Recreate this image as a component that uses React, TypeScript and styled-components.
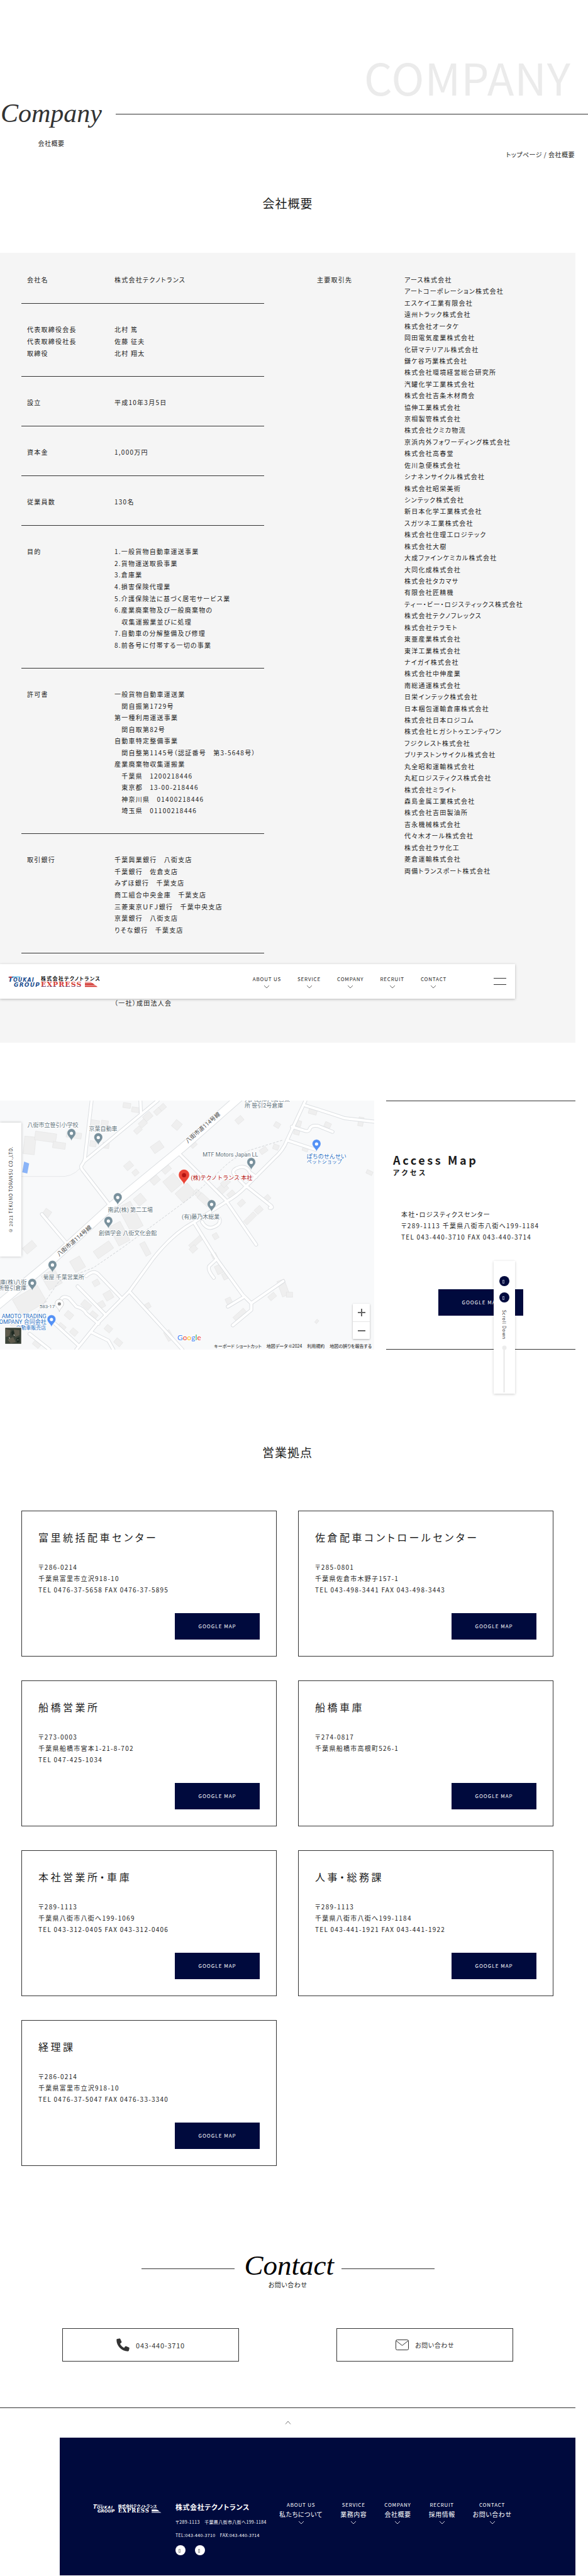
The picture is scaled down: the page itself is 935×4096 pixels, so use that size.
import React from 'react';
import styled, { createGlobalStyle } from 'styled-components';

const INK = '#1c1c1c';
const LINE = '#333';
const NAVY = '#000a3d';
const SANS = '"Noto Sans CJK JP", "Noto Sans", sans-serif';

const GlobalStyle = createGlobalStyle`
  *, *::before, *::after { box-sizing: border-box; }
  body {
    margin: 0;
    background: #fff;
    color: ${INK};
    font-family: ${SANS};
    font-size: 10px;
    line-height: 18px;
    font-feature-settings: "palt";
    overflow-x: hidden;
  }
  h1, h2, h3, p, ul, dl, dd, dt { margin: 0; padding: 0; font-weight: 400; }
  ul { list-style: none; }
  a { color: inherit; text-decoration: none; }
  button { font: inherit; cursor: pointer; }
`;

/* ---------- page title ---------- */

const Hero = styled.header`
  padding-top: 86px;
`;

const Backdrop = styled.p`
  padding-right: 27px;
  text-align: right;
  font-size: 70px;
  line-height: 72px;
  letter-spacing: 1px;
  color: #ebebeb;
`;

const TitleRow = styled.div`
  display: flex;
  align-items: flex-start;
  gap: 21px;
`;

const TitleBlock = styled.div`
  width: 163px;
  text-align: center;
`;

const Script = styled.span<{ $size: number }>`
  display: block;
  font-family: "Liberation Serif", serif;
  font-style: italic;
  font-size: ${p => p.$size}px;
  line-height: 44px;
  color: ${LINE};
`;

const ScriptCaption = styled.span`
  display: block;
  font-size: 10px;
  line-height: 18px;
  letter-spacing: 0.05em;
`;

const PageTitle = styled.h1`
  ${ScriptCaption} { margin-top: 17px; }
`;

const TitleRule = styled.div`
  flex: 1;
  margin-top: 23px;
  border-top: 1px solid ${LINE};
`;

const Breadcrumb = styled.nav`
  padding-right: 21px;
  text-align: right;
  letter-spacing: 0.05em;
`;

const Main = styled.main`
  margin-right: 20px;
`;

const SectionTitle = styled.h2<{ $before: number; $after: number }>`
  padding: ${p => p.$before}px 0 ${p => p.$after}px;
  text-align: center;
  font-size: 19px;
  line-height: 28px;
  letter-spacing: 1px;
`;

/* ---------- company profile ---------- */

const Profile = styled.section`
  position: relative;
  display: grid;
  grid-template-columns: 386fr 411fr;
  column-gap: 84px;
  padding: 2px 0 27px 34px;
  background: #f5f5f5;
  letter-spacing: 0.125em;
`;

const ProfileRow = styled.div<{ $last?: boolean }>`
  display: grid;
  grid-template-columns: 139px 1fr;
  padding: 32px 0 27px 9px;
  border-bottom: ${p => (p.$last ? '0' : `1px solid ${LINE}`)};
`;

const Lines = styled.dd<{ $height: number; $end?: boolean }>`
  display: flex;
  flex-direction: column;
  justify-content: ${p => (p.$end ? 'flex-end' : 'space-between')};
  min-height: ${p => p.$height}px;
  white-space: nowrap;
`;

const Terms = styled(Lines).attrs({ as: 'dt' })``;

const Clients = styled.dl`
  display: grid;
  grid-template-columns: 139px 1fr;
  padding-top: 32px;
  align-items: start;
`;

/* ---------- floating navigation ---------- */

const FloatingBar = styled.div`
  position: absolute;
  left: 0;
  right: 96px;
  bottom: 70px;
  height: 55px;
  display: flex;
  align-items: center;
  padding: 0 14px 0 13px;
  background: #fff;
  box-shadow: 0 1px 4px rgba(0, 0, 0, 0.25);
`;

const LogoLink = styled.a`
  display: flex;
`;

const NavList = styled.ul<{ $gap: number }>`
  display: flex;
  gap: ${p => p.$gap}px;
`;

const BarNav = styled.nav`
  margin-left: auto;
  margin-right: 75px;
`;

const NavLink = styled.a`
  display: flex;
  flex-direction: column;
  align-items: center;
  font-size: 8px;
  line-height: 14px;
  letter-spacing: 0.1em;
  white-space: nowrap;
  svg { margin-top: 2px; }
`;

const NavJp = styled.span`
  font-size: 10px;
  line-height: 16px;
  letter-spacing: 0.05em;
`;

const MenuButton = styled.button`
  width: 20px;
  height: 11px;
  padding: 0;
  background: none;
  border: solid ${LINE};
  border-width: 1px 0;
`;

/* ---------- access ---------- */

const Access = styled.section`
  position: relative;
  display: grid;
  grid-template-columns: 595fr 301fr;
  column-gap: 19px;
  margin-top: 92px;
`;

const MapFrame = styled.div`
  position: relative;
  height: 396px;
  overflow: hidden;
  background: #f8f9fa;
  letter-spacing: 0;
  > svg {
    display: block;
    width: 100%;
    height: 100%;
    font-feature-settings: normal;
  }
`;

const ZoomControls = styled.div`
  position: absolute;
  right: 7px;
  bottom: 17px;
  width: 27px;
  display: flex;
  flex-direction: column;
  background: #fff;
  border-radius: 1px;
  box-shadow: 0 1px 3px rgba(0, 0, 0, 0.3);
`;

const ZoomButton = styled.button`
  height: 28px;
  padding: 0;
  display: flex;
  align-items: center;
  justify-content: center;
  background: none;
  border: 0;
  & + & { border-top: 1px solid #e6e6e6; }
`;

const MapLinks = styled.div`
  position: absolute;
  right: 4px;
  bottom: 0;
  display: flex;
  gap: 8px;
  font-size: 7px;
  line-height: 11px;
  color: #111;
`;

const AccessPanel = styled.div`
  display: flex;
  flex-direction: column;
  padding: 80px 0 0 11px;
  border: solid ${LINE};
  border-width: 1px 0;
`;

const AccessTitle = styled.h2`
  font-size: 18px;
  line-height: 26px;
  font-weight: 700;
  letter-spacing: 0.2em;
  span {
    display: block;
    font-size: 11px;
    line-height: 14px;
  }
`;

const Address = styled.address`
  font-style: normal;
  letter-spacing: 0.125em;
  white-space: nowrap;
`;

const AccessAddress = styled(Address)`
  padding: 51px 0 74px 13px;
`;

const MapLink = styled.a`
  display: block;
  width: 135px;
  text-align: center;
  background: ${NAVY};
  color: #fff;
  font-size: 8px;
  line-height: 42px;
  letter-spacing: 1px;
`;

const AccessMapLink = styled(MapLink)`
  margin-left: 72px;
`;

const CopyrightTab = styled.small`
  position: absolute;
  left: 0;
  top: 35px;
  width: 34px;
  height: 213px;
  display: flex;
  align-items: center;
  justify-content: center;
  writing-mode: vertical-rl;
  transform: rotate(180deg);
  background: #fff;
  box-shadow: 0 0 4px rgba(0, 0, 0, 0.25);
  font-size: 7px;
  letter-spacing: 0.1em;
`;

const ScrollTab = styled.aside`
  position: absolute;
  right: 96px;
  top: 255px;
  width: 34px;
  height: 211px;
  display: flex;
  flex-direction: column;
  align-items: center;
  padding-top: 24px;
  background: #fff;
  box-shadow: 0 1px 4px rgba(0, 0, 0, 0.2);
`;

const Round = styled.a<{ $dark?: boolean }>`
  display: flex;
  align-items: center;
  justify-content: center;
  width: 16px;
  height: 16px;
  padding: 2px 4px 0 0;
  border-radius: 50%;
  background: ${p => (p.$dark ? NAVY : '#fff')};
  &::before {
    content: "";
    width: 3px;
    height: 6px;
    border: 1px solid ${p => (p.$dark ? '#8a90b0' : '#999')};
  }
`;

const RoundStack = styled.div`
  display: grid;
  gap: 10px;
`;

const ScrollLabel = styled.span`
  margin: 12px 0 9px;
  writing-mode: vertical-rl;
  font-size: 7px;
  line-height: 10px;
  letter-spacing: 0.1em;
  color: ${LINE};
`;

/* ---------- offices ---------- */

const Offices = styled.section`
  padding: 0 35px 0 34px;
`;

const OfficeGrid = styled.div`
  display: grid;
  grid-template-columns: 1fr 1fr;
  gap: 38px 34px;
`;

const OfficeCard = styled.article`
  display: flex;
  flex-direction: column;
  padding: 26px;
  border: 1px solid ${LINE};
  ${MapLink} { align-self: flex-end; }
`;

const OfficeName = styled.h3`
  font-size: 16px;
  line-height: 31px;
  letter-spacing: 0.22em;
`;

const OfficeAddress = styled(Address)`
  min-height: 55px;
  margin: 23px 0 27px;
`;

/* ---------- contact ---------- */

const Contact = styled.section`
  padding: 136px 99px 73px;
`;

const ContactTitle = styled.h2`
  display: grid;
  grid-template-columns: 148px auto 148px;
  justify-content: center;
  column-gap: 16px;
  text-align: center;
  &::before, &::after {
    content: "";
    margin-top: 27px;
    border-top: 1px solid ${LINE};
  }
`;

const ContactHead = styled.span`
  width: 138px;
  ${Script} { color: #000; }
`;

const ContactLinks = styled.div`
  display: flex;
  justify-content: space-between;
  margin-top: 60px;
`;

const ContactLink = styled.a`
  display: flex;
  align-items: center;
  justify-content: center;
  gap: 10px;
  width: 281px;
  height: 53px;
  border: 1px solid ${LINE};
  color: ${LINE};
  font-size: 10px;
  letter-spacing: 0.05em;
`;

const Phone = styled.span`
  font-size: 11px;
  letter-spacing: 0.07em;
`;

const BackToTop = styled.a`
  display: flex;
  justify-content: center;
  height: 48px;
  padding-top: 20px;
  border-top: 1px solid ${LINE};
`;

/* ---------- footer ---------- */

const Footer = styled.footer`
  display: flex;
  align-items: flex-start;
  margin: 0 20px 0 95px;
  padding: 100px 0 32px 53px;
  background: ${NAVY};
  color: #fff;
  > svg { margin-top: 4px; }
`;

const FooterInfo = styled.div`
  width: 165px;
  margin-left: 18px;
  font-size: 7px;
  line-height: 21px;
  letter-spacing: 0.05em;
  white-space: nowrap;
`;

const FooterName = styled.p`
  font-size: 11px;
  line-height: 20px;
  && { font-weight: 700; }
  letter-spacing: 0.05em;
  margin-bottom: 4px;
`;

const FooterRounds = styled.div`
  display: flex;
  gap: 15px;
  margin-top: 5px;
`;

/* ---------- data ---------- */

type Row = { terms: string[]; values: string[]; height: number; end?: boolean };

const PROFILE: Row[] = [
  { terms: ['会社名'], values: ['株式会社テクノトランス'], height: 19 },
  {
    terms: ['代表取締役会長', '代表取締役社長', '取締役'],
    values: ['北村 篤', '佐藤 征夫', '北村 翔太'],
    height: 56,
  },
  { terms: ['設立'], values: ['平成10年3月5日'], height: 19 },
  { terms: ['資本金'], values: ['1,000万円'], height: 19 },
  { terms: ['従業員数'], values: ['130名'], height: 19 },
  {
    terms: ['目的'],
    values: [
      '1.一般貨物自動車運送事業',
      '2.貨物運送取扱事業',
      '3.倉庫業',
      '4.損害保険代理業',
      '5.介護保険法に基づく居宅サービス業',
      '6.産業廃棄物及び一般廃棄物の',
      '　収集運搬業並びに処理',
      '7.自動車の分解整備及び修理',
      '8.前各号に付帯する一切の事業',
    ],
    height: 167,
  },
  {
    terms: ['許可書'],
    values: [
      '一般貨物自動車運送業',
      '　関自振第1729号',
      '第一種利用運送事業',
      '　関自取第82号',
      '自動車特定整備事業',
      '　関自整第1145号（認証番号　第3-5648号）',
      '産業廃棄物収集運搬業',
      '　千葉県　1200218446',
      '　東京都　13-00-218446',
      '　神奈川県　01400218446',
      '　埼玉県　01100218446',
    ],
    height: 203,
  },
  {
    terms: ['取引銀行'],
    values: [
      '千葉興業銀行　八街支店',
      '千葉銀行　佐倉支店',
      'みずほ銀行　千葉支店',
      '商工組合中央金庫　千葉支店',
      '三菱東京ＵＦＪ銀行　千葉中央支店',
      '京葉銀行　八街支店',
      'りそな銀行　千葉支店',
    ],
    height: 130,
  },
  { terms: [], values: ['（一社）成田法人会'], height: 56, end: true },
];

const CLIENTS = [
  'アース株式会社', 'アートコーポレーション株式会社', 'エスケイ工業有限会社', '遠州トラック株式会社',
  '株式会社オータケ', '岡田電気産業株式会社', '化研マテリアル株式会社', '鎌ケ谷巧業株式会社',
  '株式会社環境経営総合研究所', '汽罐化学工業株式会社', '株式会社吉条木材商会', '協伸工業株式会社',
  '京相製管株式会社', '株式会社クミカ物流', '京浜内外フォワーディング株式会社', '株式会社高春堂',
  '佐川急便株式会社', 'シナネンサイクル株式会社', '株式会社昭栄美術', 'シンテック株式会社',
  '新日本化学工業株式会社', 'スガツネ工業株式会社', '株式会社住理工ロジテック', '株式会社大樹',
  '大成ファインケミカル株式会社', '大同化成株式会社', '株式会社タカマサ', '有限会社匠精機',
  'ティー・ビー・ロジスティックス株式会社', '株式会社テクノフレックス', '株式会社テラモト',
  '東亜産業株式会社', '東洋工業株式会社', 'ナイガイ株式会社', '株式会社中伸産業', '南総通運株式会社',
  '日栄インテック株式会社', '日本梱包運輸倉庫株式会社', '株式会社日本ロジコム',
  '株式会社ヒガシトゥエンティワン', 'フジクレスト株式会社', 'ブリヂストンサイクル株式会社',
  '丸全昭和運輸株式会社', '丸紅ロジスティクス株式会社', '株式会社ミライト', '森島金属工業株式会社',
  '株式会社吉田製油所', '吉永機械株式会社', '代々木オール株式会社', '株式会社ラサ化工',
  '菱倉運輸株式会社', '両備トランスポート株式会社',
];

const OFFICES = [
  { name: '富里統括配車センター', lines: ['〒286-0214', '千葉県富里市立沢918-10', 'TEL 0476-37-5658 FAX 0476-37-5895'] },
  { name: '佐倉配車コントロールセンター', lines: ['〒285-0801', '千葉県佐倉市木野子157-1', 'TEL 043-498-3441 FAX 043-498-3443'] },
  { name: '船橋営業所', lines: ['〒273-0003', '千葉県船橋市宮本1-21-8-702', 'TEL 047-425-1034'] },
  { name: '船橋車庫', lines: ['〒274-0817', '千葉県船橋市高根町526-1'] },
  { name: '本社営業所・車庫', lines: ['〒289-1113', '千葉県八街市八街へ199-1069', 'TEL 043-312-0405 FAX 043-312-0406'] },
  { name: '人事・総務課', lines: ['〒289-1113', '千葉県八街市八街へ199-1184', 'TEL 043-441-1921 FAX 043-441-1922'] },
  { name: '経理課', lines: ['〒286-0214', '千葉県富里市立沢918-10', 'TEL 0476-37-5047 FAX 0476-33-3340'] },
];

const NAV = [
  ['ABOUT US', '私たちについて'],
  ['SERVICE', '業務内容'],
  ['COMPANY', '会社概要'],
  ['RECRUIT', '採用情報'],
  ['CONTACT', 'お問い合わせ'],
];

/* ---------- drawings ---------- */

const Chevron = ({ up, color = '#444' }: { up?: boolean; color?: string }) => (
  <svg width="10" height="6" viewBox="0 0 10 6" fill="none" stroke={color} aria-hidden="true">
    <path d={up ? 'M1 5.5L5 1L9 5.5' : 'M1 1L5 5L9 1'} strokeWidth={up ? 1 : 0.8} />
  </svg>
);

const Logo = ({ mono, width }: { mono?: boolean; width: number }) => {
  const c = (color: string) => (mono ? '#fff' : color);
  return (
    <svg width={width} viewBox="-1 -3 148 24" role="img" aria-label="株式会社テクノトランス">
      <defs>
        <linearGradient id="express" x1="0" y1="0" x2="0" y2="1">
          <stop offset="0.68" stopColor="#d43a35" />
          <stop offset="0.76" stopColor="#2b3f86" />
        </linearGradient>
      </defs>
      <path d="M6 0.200H19L18 2.400H5Z" fill={mono ? '#8c93b3' : '#8fd0ee'} />
      <g fontFamily='"DejaVu Sans", sans-serif' fontWeight="700" fontStyle="italic">
        <text x="-1" y="9" fontSize="11" fill={c('#1d4f91')}>T</text>
        <text x="7" y="9" fontSize="8" letterSpacing="1" fill={c('#1d4f91')}>OUKAI</text>
        <text x="8" y="17" fontSize="9" fill={c('#1d4f91')}>GROUP</text>
      </g>
      {!mono && <path d="M1.200 0.800H4.800L4.200 3H0.600Z" fill="#d43a35" />}
      <text x="51" y="6.500" fontSize="8" fontWeight="700" fill={c('#111')} fontFamily={SANS}>株式会社テクノトランス</text>
      <text x="51" y="17" fontSize="11" fontWeight="700" fill={mono ? '#fff' : 'url(#express)'} letterSpacing="1" fontFamily='"DejaVu Serif", serif'>EXPRESS</text>
      <path d="M121 9.200h9.500l1.800 1.300h-11.300z" fill={mono ? '#b4b8cd' : '#e8837e'} />
      <path d="M121 11.200h12.200l4.200 3.200h-16.400z" fill={c('#d43a35')} />
      <path d="M121 15.200h17.600l2.600 2h-20.200z" fill={mono ? '#b4b8cd' : '#d43a35'} />
    </svg>
  );
};

const PhoneIcon = () => (
  <svg width="21" height="21" viewBox="0 0 21 21" fill="#333" aria-hidden="true">
    <path d="M4.600 0.400L1.500 1.100C0.700 1.300 0.300 1.900 0.300 2.600C0.300 12.600 8.400 20.700 18.400 20.700C19.100 20.700 19.700 20.200 19.900 19.500L20.700 16.200C20.900 15.500 20.500 14.800 19.900 14.500L15.700 12.700C15.100 12.400 14.400 12.600 14 13.100L12.300 15.200C9.500 13.800 7.200 11.500 5.900 8.800L7.900 7.100C8.400 6.700 8.500 6 8.300 5.400L6.400 1.200C6.100 0.600 5.300 0.200 4.600 0.400Z" />
  </svg>
);

const MailIcon = () => (
  <svg width="21" height="17" viewBox="0 0 21 17" fill="none" stroke="#333" aria-hidden="true">
    <rect x="0.500" y="0.500" width="20" height="16" rx="2" />
    <path d="M1 2L10.500 9.500L20 2" />
  </svg>
);

/* Map geometry is surveyed on a 1519 x 1466 sheet and projected to 595 x 396. */
const mx = (x: number) => x * 0.3917;
const my = (y: number) => (y - 56) * 0.2699;

const ROADS = [
  'M372 56L345 390Q345 410 330 440Q328 455 335 465L450 680',
  'M345 410L640 56',
  'M570 56L572 130',
  'M725 365L915 640L1040 905',
  'M1240 56L1165 290Q1150 350 1110 400L1000 560Q960 620 920 650L790 770Q700 840 620 990L525 1180L395 1370L310 1522',
  'M1240 85Q1340 130 1400 160L1519 180',
  'M1185 210L1240 235Q1255 240 1258 220Q1265 200 1290 205L1350 240',
  'M1165 290L1280 345',
  'M1000 565L950 490Q940 470 960 455Q1000 430 1015 480L1040 505',
  'M1000 560L1100 675Q1110 690 1095 688',
  'M790 780L880 990L985 1200L1020 1250V1290L945 1380',
  'M880 990L850 1030Q840 1050 868 1100',
  'M1020 1250L1150 1120',
  'M988 1215L925 1270',
  'M525 1180L740 1522',
  'M170 725L275 905',
  'M350 1090Q380 1050 400 1080L490 1215',
  'M315 1150L430 1320',
  'M245 1240Q250 1200 280 1220L310 1270Q340 1280 350 1310L400 1370',
  'M200 1340L320 1500',
  'M370 1420L440 1470L460 1522',
  'M120 1430L200 1522',
  'M820 770Q840 820 870 800Q900 780 890 750',
];

const BUILDINGS: [number, number, number, number, number][] = [
  [120, 320, 18, 28, 6], [185, 270, 34, 14, 8], [240, 320, 20, 10, 8], [300, 260, 24, 9, 8], [385, 190, 14, 10, 8],
  [425, 190, 11, 9, 8], [430, 320, 10, 9, 8], [378, 310, 10, 9, 8], [515, 85, 12, 8, 8], [550, 110, 12, 8, 8],
  [600, 150, 14, 10, -42], [580, 190, 12, 9, -42], [640, 120, 11, 8, -42], [560, 230, 12, 8, -42], [660, 95, 10, 8, -42],
  [718, 200, 12, 13, 40], [638, 330, 18, 13, -35], [972, 170, 12, 9, -40], [1125, 200, 9, 8, 30], [522, 440, 13, 10, -40],
  [550, 480, 9, 8, -40], [700, 540, 22, 22, 50], [752, 600, 26, 20, -42], [675, 460, 14, 10, -42], [630, 525, 14, 10, -42],
  [568, 640, 15, 15, 50], [530, 740, 22, 44, -28], [485, 840, 20, 34, -28], [420, 935, 30, 14, -35], [590, 930, 9, 22, -28],
  [120, 920, 20, 12, -40], [190, 720, 11, 12, 35], [315, 1020, 18, 20, -30], [210, 1110, 24, 26, -30], [120, 1235, 46, 30, -30],
  [900, 580, 20, 12, -42], [940, 610, 12, 10, -42], [915, 540, 14, 9, -42], [980, 660, 11, 8, -42], [1050, 700, 12, 9, -42],
  [1015, 750, 22, 8, -45], [1085, 630, 9, 8, -42], [830, 640, 22, 11, 42], [800, 600, 10, 9, 42], [795, 890, 24, 8, -42],
  [785, 930, 11, 9, -42], [875, 855, 8, 9, -30], [890, 1050, 11, 14, -25], [915, 1090, 9, 10, -25], [870, 970, 8, 8, -25],
  [1150, 1160, 12, 26, -20], [1105, 1210, 12, 8, -40], [975, 1320, 22, 10, -42], [930, 1240, 9, 12, -25], [1175, 1200, 10, 8, 0],
  [440, 1205, 13, 13, -30], [390, 1130, 10, 9, -30], [410, 1260, 12, 10, -30], [350, 1260, 15, 10, 40], [380, 1320, 12, 9, 40],
  [280, 1320, 12, 10, 40], [250, 1390, 12, 9, 40], [300, 1420, 11, 9, 40], [440, 1400, 11, 9, 40], [480, 1480, 12, 9, 40],
  [150, 1490, 12, 9, 40], [60, 1380, 12, 9, 40], [600, 1265, 8, 8, -30], [685, 1440, 16, 10, 60], [1210, 190, 10, 9, 15],
  [1270, 120, 13, 9, 15], [1330, 200, 10, 8, 25], [1240, 340, 9, 8, 20], [1205, 240, 9, 9, 15], [1465, 180, 8, 14, 10],
  [1120, 330, 9, 8, 20], [1070, 350, 12, 8, -35], [785, 315, 10, 8, -42], [1500, 480, 10, 6, 25], [1286, 1357, 6, 4, -50],
];

const Pin = ({ x, y, color, dot = '#fff', scale = 1 }: { x: number; y: number; color: string; dot?: string; scale?: number }) => (
  <g transform={`translate(${mx(x)} ${my(y)}) scale(${scale})`}>
    <path d="M0 0C-0.800 -5.500 -6.800 -7.500 -6.800 -13A6.800 6.800 0 0 1 6.800 -13C6.800 -7.500 0.800 -5.500 0 0Z" fill={color} stroke={color === '#fff' ? '#aaa' : '#fff'} strokeWidth="0.500" />
    <circle cx="0" cy="-12.500" r="2.600" fill={dot} />
  </g>
);

type Label = { t: string; x: number; y: number; c?: string; s?: number; end?: boolean };
const SLATE = '#5f737c';
const BLUE = '#1f6fc4';

const LABELS: Label[] = [
  { t: '丸八倉庫八街営業', x: 993, y: 50 },
  { t: '所 笹引2号倉庫', x: 993, y: 84 },
  { t: '八街市立笹引小学校', x: 111, y: 199 },
  { t: '京葉自動車', x: 361, y: 224 },
  { t: 'MTF Motors Japan LL', x: 823, y: 373 },
  { t: 'ぽちのせんせい', x: 1245, y: 384, c: BLUE },
  { t: 'ペットショップ', x: 1245, y: 416, c: BLUE, s: 8 },
  { t: '(株)テクノトランス 本社', x: 775, y: 511, c: '#b31412' },
  { t: '南武(株) 第二工場', x: 438, y: 700 },
  { t: '(有)藤乃木総業', x: 738, y: 741 },
  { t: '創価学会 八街文化会館', x: 401, y: 839 },
  { t: '菊屋 千葉営業所', x: 175, y: 1098 },
  { t: '庫(株)八街', x: 108, y: 1127, end: true },
  { t: '所笹引倉庫', x: 108, y: 1160, end: true },
  { t: '583-17', x: 160, y: 1267, s: 8 },
  { t: 'AMOTO TRADING', x: 188, y: 1328, c: BLUE, end: true },
  { t: 'OMPANY 合同会社', x: 188, y: 1362, c: BLUE, end: true },
  { t: '自動車販売店', x: 187, y: 1392, c: BLUE, s: 8, end: true },
];

const MapDrawing = () => (
  <svg viewBox="0 0 595 396" preserveAspectRatio="xMidYMid slice" role="img" aria-label="本社周辺の地図">
    <rect width="595" height="396" fill="#f8f9fa" />
    <path d={`M${mx(98)} ${my(415)}l8 3l-3 16l-8 -2z`} fill="#8ab4f8" />
    <path d={`M${mx(87)} ${my(503)}H${mx(240)}Q${mx(290)} ${my(510)} ${mx(325)} ${my(455)}`} fill="none" stroke="#e6e8ea" />
    {BUILDINGS.map(([x, y, w, h, r], i) => (
      <rect key={i} x={-w / 2} y={-h / 2} width={w} height={h} fill="#efefef" stroke="#e2e2e2" strokeWidth="0.600" transform={`translate(${mx(x)} ${my(y)}) rotate(${r})`} />
    ))}
    <g transform="scale(0.3917 0.2699) translate(0 -56)" fill="none" strokeLinecap="round" strokeLinejoin="round">
      <path d="M1145 290L1010 350Q940 400 900 460L780 620L500 920L380 1040L240 1120L150 1310" stroke="#d2d5d8" strokeDasharray="3 3" vectorEffect="non-scaling-stroke" />
      {ROADS.map(d => <path key={d} d={d} stroke="#dcdfe2" strokeWidth="6" vectorEffect="non-scaling-stroke" />)}
      <path d="M-20 1275L220 985L450 680L735 340L970 40" stroke="#dcdfe2" strokeWidth="14" vectorEffect="non-scaling-stroke" />
      {ROADS.map(d => <path key={d} d={d} stroke="#fff" strokeWidth="4" vectorEffect="non-scaling-stroke" />)}
      <path d="M-20 1275L220 985L450 680L735 340L970 40" stroke="#fff" strokeWidth="12" vectorEffect="non-scaling-stroke" />
    </g>
    <Pin x={290} y={295} color="#78909c" />
    <Pin x={399} y={320} color="#78909c" />
    <Pin x={1020} y={466} color="#78909c" />
    <Pin x={478} y={673} color="#78909c" />
    <Pin x={859} y={714} color="#78909c" />
    <Pin x={440} y={812} color="#78909c" />
    <Pin x={213} y={1071} color="#78909c" />
    <Pin x={131} y={1178} color="#78909c" />
    <Pin x={241} y={1300} color="#fff" dot="#888" />
    <Pin x={1285} y={358} color="#5491f5" />
    <Pin x={209} y={1392} color="#5491f5" />
    <Pin x={747} y={555} color="#ea4335" dot="#b31412" scale={1.280} />
    <g fontFamily='Roboto, "Noto Sans CJK JP", sans-serif' stroke="#fff" strokeWidth="2" paintOrder="stroke" strokeLinejoin="round">
      {LABELS.map(l => (
        <text key={l.t} x={mx(l.x)} y={my(l.y) + 3} fontSize={l.s ?? 9} fill={l.c ?? SLATE} textAnchor={l.end ? 'end' : 'start'}>{l.t}</text>
      ))}
      <text fontSize="9" fill="#4a4a4a" transform={`translate(${mx(762)} ${my(308)}) rotate(-41)`}>八街市道114号線</text>
      <text fontSize="9" fill="#4a4a4a" transform={`translate(${mx(240)} ${my(975)}) rotate(-41)`}>八街市道114号線</text>
      <text x={mx(720)} y={my(1468)} fontSize="12" fontFamily="Lato, sans-serif">
        <tspan fill="#4285f4">G</tspan><tspan fill="#ea4335">o</tspan><tspan fill="#fbbc05">o</tspan><tspan fill="#4285f4">g</tspan><tspan fill="#34a853">l</tspan><tspan fill="#ea4335">e</tspan>
      </text>
    </g>
    <rect x="7.500" y="360.500" width="27" height="27" rx="1" fill="#3a4238" stroke="#fff" strokeWidth="1.500" />
    <path d="M9 363l8 2l-2 9l-6 2z M22 364l9 1v8l-7 3z M12 380l9 -4l4 8l-8 2z" fill="#5d5a4c" />
    <path d="M18 368l3 -3l2 5l-4 4z M26 378l5 -2v8l-4 1z" fill="#1f2a22" />
    <path d="M14 377l2 1M22 372l1 2M28 380l1 1" stroke="#d9d9d0" />
  </svg>
);

/* ---------- page ---------- */

const stack = (lines: string[]) => lines.map((l, i) => <span key={i}>{l}</span>);
const broken = (lines: string[]) => lines.map((l, i) => <div key={i}>{l}</div>);

export default function App() {
  return (
    <>
      <GlobalStyle />
      <Hero>
        <Backdrop aria-hidden="true">COMPANY</Backdrop>
        <TitleRow>
          <TitleBlock>
            <PageTitle>
              <Script $size={42}>Company</Script>
              <ScriptCaption>会社概要</ScriptCaption>
            </PageTitle>
          </TitleBlock>
          <TitleRule />
        </TitleRow>
        <Breadcrumb aria-label="パンくず">
          <a href="#top">トップページ</a> / 会社概要
        </Breadcrumb>
      </Hero>

      <Main>
        <SectionTitle $before={54} $after={65}>会社概要</SectionTitle>
        <Profile>
          <dl>
            {PROFILE.map((r, i) => (
              <ProfileRow key={i} $last={r.end}>
                <div>{r.terms.length > 0 && <Terms $height={r.terms.length > 1 ? r.height : 19}>{stack(r.terms)}</Terms>}</div>
                <Lines $height={r.height} $end={r.end}>{stack(r.values)}</Lines>
              </ProfileRow>
            ))}
          </dl>
          <Clients>
            <Terms $height={19}>{stack(['主要取引先'])}</Terms>
            <Lines $height={958}>{stack(CLIENTS)}</Lines>
          </Clients>
          <FloatingBar>
            <LogoLink href="#top"><Logo width={148} /></LogoLink>
            <BarNav aria-label="メイン">
              <NavList $gap={26}>
                {NAV.map(([en]) => (
                  <li key={en}><NavLink href="#nav">{en}<Chevron /></NavLink></li>
                ))}
              </NavList>
            </BarNav>
            <MenuButton aria-label="メニュー" />
          </FloatingBar>
        </Profile>

        <Access>
          <MapFrame>
            <MapDrawing />
            <ZoomControls>
              <ZoomButton aria-label="拡大">
                <svg width="12" height="12" viewBox="0 0 12 12" stroke="#666" strokeWidth="2"><path d="M6 0V12M0 6H12" /></svg>
              </ZoomButton>
              <ZoomButton aria-label="縮小">
                <svg width="12" height="12" viewBox="0 0 12 12" stroke="#666" strokeWidth="2"><path d="M0 6H12" /></svg>
              </ZoomButton>
            </ZoomControls>
            <MapLinks>
              <span>キーボード ショートカット</span>
              <span>地図データ ©2024</span>
              <a href="#terms">利用規約</a>
              <a href="#report">地図の誤りを報告する</a>
            </MapLinks>
          </MapFrame>
          <AccessPanel>
            <AccessTitle>Access Map<span>アクセス</span></AccessTitle>
            <AccessAddress>
              {broken(['本社・ロジスティクスセンター', '〒289-1113 千葉県八街市八街へ199-1184', 'TEL 043-440-3710 FAX 043-440-3714'])}
            </AccessAddress>
            <AccessMapLink href="#map">GOOGLE MAP</AccessMapLink>
          </AccessPanel>
          <CopyrightTab>© 2021 TEKUNO TORANSU CO.,LTD.</CopyrightTab>
          <ScrollTab>
            <RoundStack>
              <Round $dark href="#facebook" aria-label="Facebook" />
              <Round $dark href="#instagram" aria-label="Instagram" />
            </RoundStack>
            <ScrollLabel>Scroll Down</ScrollLabel>
            <svg width="8" height="75" viewBox="0 0 8 75" aria-hidden="true">
              <rect x="3" y="4" width="1" height="71" fill="#d4d4d4" />
              <circle cx="4" cy="4" r="3.500" fill="#ececec" />
            </svg>
          </ScrollTab>
        </Access>

        <Offices>
          <SectionTitle $before={149} $after={79}>営業拠点</SectionTitle>
          <OfficeGrid>
            {OFFICES.map(o => (
              <OfficeCard key={o.name}>
                <OfficeName>{o.name}</OfficeName>
                <OfficeAddress>{broken(o.lines)}</OfficeAddress>
                <MapLink href="#map">GOOGLE MAP</MapLink>
              </OfficeCard>
            ))}
          </OfficeGrid>
        </Offices>

        <Contact>
          <ContactTitle>
            <ContactHead>
              <Script $size={45}>Contact</Script>
              <ScriptCaption>お問い合わせ</ScriptCaption>
            </ContactHead>
          </ContactTitle>
          <ContactLinks>
            <ContactLink href="tel:043-440-3710"><PhoneIcon /><Phone>043-440-3710</Phone></ContactLink>
            <ContactLink href="#contact"><MailIcon />お問い合わせ</ContactLink>
          </ContactLinks>
        </Contact>

        <BackToTop href="#top" aria-label="ページの先頭へ"><Chevron up color="#777" /></BackToTop>
      </Main>

      <Footer>
        <Logo mono width={113} />
        <FooterInfo>
          <FooterName>株式会社テクノトランス</FooterName>
          <p>〒289-1113　千葉県八街市八街へ199-1184</p>
          <p>TEL:043-440-3710　FAX:043-440-3714</p>
          <FooterRounds>
            <Round href="#facebook" aria-label="Facebook" />
            <Round href="#instagram" aria-label="Instagram" />
          </FooterRounds>
        </FooterInfo>
        <nav aria-label="フッター">
          <NavList $gap={28}>
            {NAV.map(([en, jp]) => (
              <li key={en}><NavLink href="#nav">{en}<NavJp>{jp}</NavJp><Chevron color="#fff" /></NavLink></li>
            ))}
          </NavList>
        </nav>
      </Footer>
    </>
  );
}
